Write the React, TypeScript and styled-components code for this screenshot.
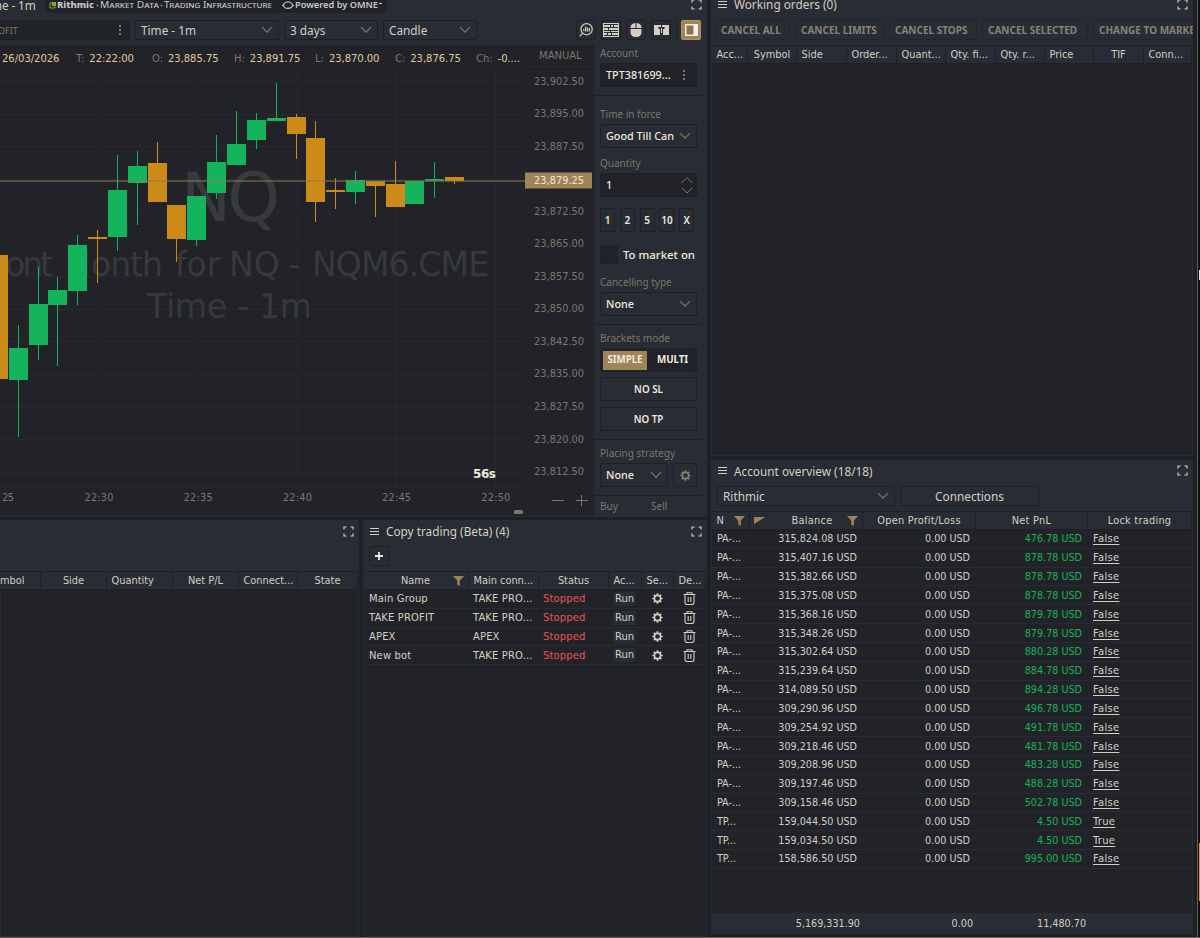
import { FC, ReactNode } from 'react';
import styled, { createGlobalStyle, css } from 'styled-components';

const theme = {
  page: '#1d2026',
  panel: '#282c34',
  dark: '#212329',
  line: '#1d2026',
  grid: '#26292e',
  text: '#d5cfc2',
  bright: '#efe9dc',
  muted: '#7d776c',
  gold: '#a08458',
  green: '#14b45c',
  orange: '#cb8b16',
  red: '#ec5052',
};

const fonts = {
  ui: '"Noto Sans", "Open Sans", sans-serif',
  table: '"DejaVu Sans Condensed", "DejaVu Sans", sans-serif',
  chart: '"DejaVu Sans", sans-serif',
};

const GlobalStyle = createGlobalStyle`
  * {
    box-sizing: border-box;
  }

  body {
    margin: 0;
    background: ${theme.page};
    overflow: hidden;
  }

  button {
    font: inherit;
    color: inherit;
    margin: 0;
    padding: 0;
  }
`;

const Screen = styled.div`
  display: grid;
  grid-template-columns: 707px 4px 482px 4px 1px 2px;
  width: 1200px;
  height: 938px;
  overflow: hidden;
  background: ${theme.page};
  color: ${theme.text};
  font-family: ${fonts.ui};
  font-size: 11.8px;
  border-bottom: 1px solid #6b5d48;
  white-space: nowrap;
`;

const LeftSide = styled.div`
  display: grid;
  grid-column: 1;
  grid-template-rows: 517px 417px;
  row-gap: 3px;
  min-width: 0;
`;

const RightSide = styled.div`
  display: grid;
  grid-column: 3;
  grid-template-rows: 456px 474px;
  row-gap: 4px;
  min-width: 0;
`;

const WindowEdge = styled.div`
  grid-column: 5;
  background: #6b5d48;
`;

const Behind = styled.div`
  display: flex;
  flex-direction: column;
  grid-column: 6;
  padding-left: 1px;
  background: #0d1016;
`;

const BehindMark = styled.div<{ $color: string; $top: number; $height: number }>`
  height: ${props => props.$height}px;
  margin-top: ${props => props.$top}px;
  background: ${props => props.$color};
`;

const Panel = styled.section`
  display: flex;
  flex-direction: column;
  min-width: 0;
  overflow: hidden;
  background: ${theme.panel};
`;

const BottomPanels = styled.div`
  display: grid;
  grid-template-columns: 359px 344px;
  column-gap: 4px;
`;

const PanelHeader = styled.header<{ $height: number; $space: number }>`
  display: flex;
  align-items: center;
  flex: none;
  height: ${props => props.$height}px;
  margin-bottom: ${props => props.$space}px;
  padding: 0 5px 0 7px;
  gap: 7px;
  font-size: 11.8px;

  > :last-child {
    margin-left: auto;
  }
`;

const control = css`
  display: flex;
  align-items: center;
  border: 1px solid ${theme.line};
  border-radius: 2px;
  background: ${theme.panel};
`;

/* ---------- icons ---------- */

const ExpandIcon = () => (
  <svg width="11" height="11" viewBox="0 0 11 11" fill="none" stroke={theme.text} strokeWidth="1.2">
    <path d="M1 3.6V1h2.6M7.4 1H10v2.6M10 7.4V10H7.4M3.6 10H1V7.4" />
  </svg>
);

const MenuIcon = () => (
  <svg width="9" height="9" viewBox="0 0 9 9" stroke={theme.text} strokeWidth="1">
    <path d="M0 1.5h9M0 4.5h9M0 7.5h9" />
  </svg>
);

const Chevron = () => (
  <svg width="12" height="8" viewBox="0 0 12 8" fill="none" stroke={theme.muted} strokeWidth="1.2">
    <path d="M1 1.2l5 5 5-5" />
  </svg>
);

const Dots = () => (
  <svg width="4" height="12" viewBox="0 0 4 12" fill={theme.muted}>
    <path d="M1 1h2v2H1zM1 5h2v2H1zM1 9h2v2H1z" />
  </svg>
);

const FilterIcon = () => (
  <svg width="11" height="10" viewBox="0 0 11 10" fill={theme.gold}>
    <path d="M0 0h11L6.8 4.6V10L4.2 8.6v-4z" />
  </svg>
);

const SortIcon = () => (
  <svg width="11" height="7" viewBox="0 0 11 7" fill={theme.gold}>
    <path d="M0 0h11L0 7z" />
  </svg>
);

const GearIcon: FC<{ color: string }> = ({ color }) => (
  <svg width="11" height="11" viewBox="0 0 12 12" fill="none" stroke={color}>
    <circle cx="6" cy="6" r="3.4" strokeWidth="1.7" />
    <path
      strokeWidth="1.9"
      d="M6 .4v2M6 9.6v2M.4 6h2M9.6 6h2M2 2l1.5 1.5M8.5 8.5L10 10M10 2L8.5 3.5M3.5 8.5L2 10"
    />
  </svg>
);

const TrashIcon = () => (
  <svg width="13" height="13" viewBox="0 0 13 13" fill="none" stroke={theme.text} strokeWidth="1.1">
    <path d="M.5 2.5h12M4 2.5V.8h5v1.7M2 2.5v8q0 2 2 2h5q2 0 2-2v-8M5.2 5v5M7.8 5v5" />
  </svg>
);

const SearchChartIcon = () => (
  <svg width="14" height="14" viewBox="0 0 14 14" fill="none" stroke={theme.text} strokeWidth="1.2">
    <circle cx="7.6" cy="6.2" r="5.6" />
    <path d="M3.8 10L.8 13.3M4.8 6v2M6.6 3.5v5M8.5 4.5v4M10.4 5v3.5" />
  </svg>
);

const RowsIcon = () => (
  <svg width="16" height="14" viewBox="0 0 16 14" fill={theme.text} shapeRendering="crispEdges">
    <path d="M0 0h16v1H0zM0 13h16v1H0zM0 1h1v12H0zM15 1h1v12h-1z" />
    <path d="M1 2h6v2H1zM8 2h2v2H8zM11 2h4v2h-4zM1 5h4v2H1zM6 5h9v2H6zM1 8h6v1H1zM8 8h7v1H8zM1 10h3v2H1zM5 10h3v2H5zM9 10h6v2H9z" />
  </svg>
);

const MouseIcon = () => (
  <svg width="12" height="14" viewBox="0 0 12 14" fill={theme.text}>
    <path d="M5.5 0v5H.5V4.500Q.8.3 5.5 0zM6.5 0v5h5V4.500Q11.2.3 6.5 0zM.5 6h11v3q0 5-5.5 5T.5 9z" />
  </svg>
);

const BookIcon = () => (
  <svg width="15" height="10" viewBox="0 0 15 10" fill={theme.text}>
    <path d="M0 0h7v2H4.5v2H6v6H0zM8 0h7v10H9V4h1.5V2H8zM7 3h1v5H7z" />
  </svg>
);

const SidebarIcon = () => (
  <svg width="13" height="12" viewBox="0 0 13 12">
    <path d="M0 0h13v12H0z" fill="#f5f1e8" />
    <path d="M1.5 1.5h7v9h-7z" fill="#8b7350" />
  </svg>
);

/* ---------- chart window ---------- */

const ChartTitle = styled.div`
  display: flex;
  align-items: flex-start;
  flex: none;
  height: 20px;
  padding-right: 5px;

  > :last-child {
    margin-left: auto;
    margin-top: -1px;
  }
`;

const ChartName = styled.div`
  width: 45px;
  margin-top: -3px;
  line-height: 16px;
  text-indent: -9px;
  letter-spacing: -0.1px;
`;

const Provider = styled.div`
  display: flex;
  align-items: center;
  width: 342px;
  height: 13px;
  padding: 0 3px 3px;
  background: ${theme.dark};
  color: #c8c8c8;
`;

const ChartToolbar = styled.div`
  display: flex;
  flex: none;
  height: 25px;
`;

const Field = styled.div<{ $width: number; $gap?: number; $dark?: boolean; $tall?: boolean }>`
  ${control}
  flex: none;
  justify-content: space-between;
  width: ${props => props.$width}px;
  height: ${props => (props.$tall ? 24 : 20)}px;
  margin-right: ${props => props.$gap ?? 0}px;
  padding: 0 5px 1px 5px;
  ${props => props.$dark && `background: ${theme.dark};`}
`;

const ProfileField = styled(Field)`
  padding: 0 7px 0 0;
  border-left: 0;
  color: ${theme.muted};
  font-size: 9px;
  text-indent: -2px;
`;

const AccountField = styled(Field)`
  padding-right: 10px;
`;

const QuantityField = styled(Field)`
  padding-right: 2px;
`;

const ToolButton = styled.button<{ $active?: boolean }>`
  ${control}
  justify-content: center;
  width: 20px;
  height: 20px;
  margin-right: 5px;
  ${props => props.$active && `background: ${theme.gold}; border-color: #b59462;`}
`;

const ToolGroup = styled.div`
  display: flex;
  margin-left: 99px;
`;

const ToolSeparator = styled.div`
  width: 1px;
  height: 20px;
  margin-right: 4px;
  background: ${theme.line};
`;

const ChartBody = styled.div`
  display: grid;
  grid-template-columns: 594px 113px;
  height: 472px;
`;

const ChartArea = styled.div`
  background: ${theme.dark};
  border-bottom: 1px solid ${theme.panel};
  font-family: ${fonts.chart};
`;

const InfoBar = styled.div`
  display: grid;
  grid-template-columns: 76px 76px 82px 81px 80px 81px 49px 69px;
  align-items: center;
  height: 21px;
  padding-top: 5px;
  font-size: 10px;
  letter-spacing: -0.04px;
  color: #e0c99d;
`;

const InfoDate = styled.span`
  padding-left: 2px;
  letter-spacing: -0.02px;
`;

const InfoKey = styled.span`
  margin-right: 5px;
  color: ${theme.muted};
`;

const AxisMode = styled.div`
  padding-left: 14px;
  margin-top: -5px;
  color: ${theme.muted};
  letter-spacing: 0;
`;

type CandleData = {
  x: number;
  top: number;
  bottom: number;
  high: number;
  low: number;
  up: boolean;
};

const candle = (
  x: number,
  top: number,
  bottom: number,
  high: number,
  low: number,
  up = true,
): CandleData => ({ x, top, bottom, high, low, up });

const candles = [
  candle(-12, 255, 379, 255, 379, false),
  candle(9, 348, 380, 325, 437),
  candle(29, 304, 345, 267, 360),
  candle(48, 290, 305, 277, 366),
  candle(68, 245, 291, 235, 305),
  candle(88, 237, 239, 230, 283, false),
  candle(108, 190, 237, 155, 251),
  candle(128, 166, 183, 151, 225),
  candle(148, 163, 202, 142, 202, false),
  candle(167, 205, 239, 205, 262, false),
  candle(187, 196, 240, 196, 246),
  candle(207, 162, 193, 135, 199),
  candle(227, 144, 165, 111, 165),
  candle(247, 120, 140, 113, 149),
  candle(267, 118, 121, 83, 121),
  candle(287, 117, 134, 114, 159, false),
  candle(306, 138, 202, 121, 222, false),
  candle(326, 190, 192, 178, 209, false),
  candle(346, 180, 192, 171, 204),
  candle(366, 181, 186, 181, 217, false),
  candle(386, 184, 207, 161, 207, false),
  candle(405, 181, 204, 181, 204),
  candle(425, 179, 181, 162, 198),
  candle(445, 177, 181, 177, 184, false),
];

const prices = [
  '23,902.50',
  '23,895.00',
  '23,887.50',
  '23,879.25',
  '23,872.50',
  '23,865.00',
  '23,857.50',
  '23,850.00',
  '23,842.50',
  '23,835.00',
  '23,827.50',
  '23,820.00',
  '23,812.50',
];

const times = ['22:30', '22:35', '22:40', '22:45', '22:50'];

const PriceChart = () => (
  <svg width="594" height="449" viewBox="0 66 594 449" fontFamily={fonts.chart} display="block">
    <g stroke={theme.grid} shapeRendering="crispEdges">
      {prices.map((price, i) => (
        <path key={price} d={`M0 ${Math.round(81 + i * 32.55)}.5H525`} />
      ))}
      {times.map((time, i) => (
        <path key={time} d={`M${Math.round(98 + i * 99.3)}.5 66V487`} />
      ))}
      <path d="M525 66.5H594M0 487.5H525" />
    </g>
    <g fill="#38393c">
      <text x="181" y="221" fontSize="67" textLength="99">NQ</text>
      <g fontSize="33">
        <text x="5" y="276" textLength="48">ont</text>
        <text x="65" y="276" textLength="25.5" lengthAdjust="spacingAndGlyphs">M</text>
        <text x="91" y="276" textLength="72">onth</text>
        <text x="175" y="276">for</text>
        <text x="229" y="276">NQ</text>
        <text x="288" y="276">-</text>
        <text x="312" y="276" textLength="177">NQM6.CME</text>
        <text x="147" y="318" textLength="165">Time - 1m</text>
      </g>
    </g>
    {candles.map(c => (
      <g key={c.x} fill={c.up ? theme.green : theme.orange} shapeRendering="crispEdges">
        <rect x={c.x + 9} y={c.high} width="1" height={c.low - c.high} />
        <rect x={c.x} y={c.top} width={c.x < 0 ? 20 : 19} height={c.bottom - c.top} />
      </g>
    ))}
    <path d="M0 181H525" stroke="#917850" strokeWidth="1" />
    <rect x="525" y="172.5" width="67" height="16" fill={theme.gold} />
    <g fontSize="9.8" fill={theme.muted}>
      {prices.map((price, i) => (
        <text
          key={price}
          x="534"
          y={(i === 3 ? 86 : 84.5) + i * 32.55}
          textLength="50"
          fill={i === 3 ? theme.bright : undefined}
        >
          {price}
        </text>
      ))}
      <text x="2" y="501" textLength="12">25</text>
      {times.map((time, i) => (
        <text key={time} x={84.5 + i * 99.2} y="501" textLength="29">
          {time}
        </text>
      ))}
    </g>
    <text x="473" y="478" fontSize="12" fontWeight="bold" fill={theme.bright} textLength="23">
      56s
    </text>
    <path d="M552 500.5h12M576 500.5h12M581.5 495v11" stroke={theme.muted} />
    <rect x="514" y="510" width="9" height="4" rx="1.5" fill={theme.muted} />
  </svg>
);

/* ---------- order entry ---------- */

const OrderEntry = styled.aside`
  display: flex;
  flex-direction: column;
  margin-right: 4px;
  padding-right: 1px;
  font-size: 11px;
`;

const Label = styled.div<{ $top?: number }>`
  height: 18px;
  margin-top: ${props => props.$top ?? 0}px;
  padding-left: 6px;
  line-height: 16px;
  font-size: 10px;
  color: ${theme.muted};
`;

const Group = styled.div`
  flex: none;
  padding-bottom: 8px;
  border-bottom: 1px solid ${theme.line};
`;

const Line = styled.div<{ $top?: number }>`
  display: flex;
  margin: ${props => props.$top ?? 0}px 0 0 6px;
  font-size: 10.8px;
  font-weight: 500;
  color: ${theme.bright};
`;

const QuantityButton = styled.button`
  ${control}
  justify-content: center;
  width: 15px;
  height: 24px;
  margin-right: 4.8px;
  font-size: 10px;
  font-weight: 600;
  letter-spacing: -0.2px;
`;

const Checkbox = styled.span`
  width: 18px;
  height: 18px;
  margin-right: 5px;
  border: 1px solid ${theme.line};
  background: ${theme.dark};
`;

const CheckLabel = styled.span`
  font-size: 11.4px;
  line-height: 18px;
`;

const Modes = styled.div`
  ${control}
  width: 97px;
  height: 24px;
  padding: 2px;
  background: ${theme.dark};
`;

const Mode = styled.button<{ $active?: boolean }>`
  flex: none;
  width: ${props => (props.$active ? 44 : 49)}px;
  height: 19px;
  border: 0;
  padding: 0 0 1px ${props => (props.$active ? 0 : 2)}px;
  background: ${props => (props.$active ? theme.gold : 'transparent')};
  font-size: 9.8px;
  font-weight: 700;
  letter-spacing: -0.1px;
`;

const WideButton = styled.button`
  ${control}
  justify-content: center;
  width: 97px;
  height: 24px;
  font-size: 9.8px;
  font-weight: 600;
`;

const BuySell = styled.div`
  display: grid;
  grid-template-columns: 51px 1fr;
  padding: 3px 0 0 6px;
  font-size: 10px;
  line-height: 14px;
  color: ${theme.muted};
`;

const GearButton = styled(ToolButton)`
  width: 24px;
  height: 24px;
  margin: 0;
`;

/* ---------- tables ---------- */

const Toolbar = styled.div<{ $height: number; $left?: number; $gap?: number; $top?: number }>`
  display: flex;
  flex: none;
  gap: ${props => props.$gap ?? 6}px;
  height: ${props => props.$height}px;
  padding: ${props => props.$top ?? 0}px 0 0 ${props => props.$left ?? 6}px;
  overflow: hidden;
`;

const OrderAction = styled.button<{ $width: number }>`
  ${control}
  flex: none;
  width: ${props => props.$width}px;
  height: 20px;
  padding-left: 5px;
  border-color: #22262c;
  font-size: 10px;
  font-weight: 700;
  letter-spacing: 0;
  color: #878378;
`;

const ConnectionsButton = styled.button`
  ${control}
  justify-content: center;
  width: 139px;
  height: 20px;
  margin-left: -1px;
  padding-bottom: 1px;
`;

const TableBody = styled.div`
  flex: 1;
  margin: 0 1px 1px;
  background: ${theme.dark};
`;

const HeadRow = styled.div<{ $columns: string; $flush?: boolean; $spacing?: number }>`
  display: grid;
  grid-template-columns: ${props => props.$columns};
  flex: none;
  height: 19px;
  margin: 0 1px 0 ${props => (props.$flush ? 0 : 1)}px;
  border-top: 1px solid ${theme.line};
  border-bottom: 1px solid ${theme.line};
  font-family: ${fonts.table};
  font-size: 10.9px;
  letter-spacing: ${props => props.$spacing ?? 0}px;
`;

const HeadCell = styled.div<{ $left?: boolean }>`
  display: flex;
  align-items: center;
  justify-content: ${props => (props.$left ? 'flex-start' : 'center')};
  min-width: 0;
  padding: 0 4px 0 ${props => (props.$left ? 4.5 : 4)}px;
  border-right: 1px solid ${theme.line};
  overflow: hidden;
`;

const CutHeadCell = styled(HeadCell)`
  padding-left: 0;
`;

const Heading = styled.span<{ $shift?: number }>`
  margin: auto;
  padding-left: ${props => props.$shift ?? 0}px;
`;

const Row = styled.div<{ $columns: string }>`
  display: grid;
  grid-template-columns: ${props => props.$columns};
  align-items: center;
  height: 18.83px;
  border-bottom: 1px solid ${theme.panel};
  font-family: ${fonts.table};
  font-size: 10.7px;
`;

const BotRow = styled(Row)`
  font-size: 11.1px;
  letter-spacing: 0.15px;
`;

const Cell = styled.div<{ $color?: string; $right?: boolean; $center?: boolean }>`
  display: flex;
  justify-content: ${props => (props.$right ? 'flex-end' : props.$center ? 'center' : 'flex-start')};
  padding: 0 6px 0 5px;
  color: ${props => props.$color ?? theme.text};
`;

const LockLink = styled.a`
  font-size: 11.1px;
  letter-spacing: 0.3px;
  text-decoration: underline;
  text-underline-offset: 2px;
`;

const RunButton = styled.button`
  width: 31px;
  height: 14px;
  border: 0;
  border-radius: 2px;
  background: ${theme.panel};
  line-height: 14px;
`;

const Totals = styled.div`
  display: grid;
  grid-template-columns: 148px 113px 113px;
  align-items: center;
  flex: none;
  height: 19px;
  margin: 0 1px 1px;
  font-family: ${fonts.table};
  font-size: 10.7px;
  text-align: right;
`;

const PanelTitle: FC<{ children?: ReactNode; height: number; space?: number }> = ({
  children,
  height,
  space = 0,
}) => (
  <PanelHeader $height={height} $space={space}>
    {children && <MenuIcon />}
    {children && <span>{children}</span>}
    <ExpandIcon />
  </PanelHeader>
);

const POSITION_COLUMNS = '41px 66px 66px 66px 59px 60px';
const COPY_COLUMNS = '105px 70px 70px 33px 32px 32px';
const BOT_COLUMNS = '104px 70px 70px 34px 31px 33px';
const ORDER_COLUMNS = '36px 49px 50px 50px 49px 50px 49px 49px 50px 48px';
const ACCOUNT_COLUMNS = '38px 113px 113px 112px 104px';

const bots = [
  ['Main Group', 'TAKE PRO...'],
  ['TAKE PROFIT', 'TAKE PRO...'],
  ['APEX', 'APEX'],
  ['New bot', 'TAKE PRO...'],
];

const accounts = [
  ['PA-...', '315,824.08', '476.78', 'False'],
  ['PA-...', '315,407.16', '878.78', 'False'],
  ['PA-...', '315,382.66', '878.78', 'False'],
  ['PA-...', '315,375.08', '878.78', 'False'],
  ['PA-...', '315,368.16', '879.78', 'False'],
  ['PA-...', '315,348.26', '879.78', 'False'],
  ['PA-...', '315,302.64', '880.28', 'False'],
  ['PA-...', '315,239.64', '884.78', 'False'],
  ['PA-...', '314,089.50', '894.28', 'False'],
  ['PA-...', '309,290.96', '496.78', 'False'],
  ['PA-...', '309,254.92', '491.78', 'False'],
  ['PA-...', '309,218.46', '481.78', 'False'],
  ['PA-...', '309,208.96', '483.28', 'False'],
  ['PA-...', '309,197.46', '488.28', 'False'],
  ['PA-...', '309,158.46', '502.78', 'False'],
  ['TP...', '159,044.50', '4.50', 'True'],
  ['TP...', '159,034.50', '4.50', 'True'],
  ['TP...', '158,586.50', '995.00', 'False'],
];

const info = [
  ['T:', '22:22:00'],
  ['O:', '23,885.75'],
  ['H:', '23,891.75'],
  ['L:', '23,870.00'],
  ['C:', '23,876.75'],
  ['Ch:', '-0....'],
];

const SmallCaps = styled.text`
  font-variant: small-caps;
`;

const ProviderLogo = () => (
  <svg width="336" height="10" viewBox="48 0 336 10" fontFamily={fonts.ui} fill="#c8c8c8">
    <path d="M50 3h5v5h-5z" fill="none" stroke="#85a820" />
    <path d="M52 2h4v4h-4z" fill="#85a820" />
    <g fontSize="8">
      <text x="57" y="8" fontWeight="800" textLength="37" lengthAdjust="spacingAndGlyphs">
        Rithmic
      </text>
      <SmallCaps x="100" y="8" textLength="59" lengthAdjust="spacingAndGlyphs">
        Market Data
      </SmallCaps>
      <SmallCaps x="164" y="8" textLength="108" lengthAdjust="spacingAndGlyphs">
        Trading Infrastructure
      </SmallCaps>
      <text x="295" y="8" fontWeight="600" textLength="83" lengthAdjust="spacingAndGlyphs">
        Powered by OMNE
      </text>
    </g>
    <path d="M379 3.5h3" stroke="#c8c8c8" />
    <circle cx="161.5" cy="5.5" r="1" fill="#85a820" />
    <circle cx="97.5" cy="5.5" r="1" fill="#85a820" />
    <ellipse cx="288" cy="5.2" rx="4.5" ry="3.2" fill="none" stroke="#c8c8c8" strokeWidth="1.2" />
    <path d="M282 5.5h2M292 5.5h2" stroke="#c8c8c8" />
  </svg>
);

const ChartWindow = () => (
  <Panel>
    <ChartTitle>
      <ChartName>me - 1m</ChartName>
      <Provider>
        <ProviderLogo />
      </Provider>
      <ExpandIcon />
    </ChartTitle>
    <ChartToolbar>
      <ProfileField $width={130} $gap={5} $dark>
        OFIT
        <Dots />
      </ProfileField>
      <Field $width={144} $gap={5}>
        Time - 1m
        <Chevron />
      </Field>
      <Field $width={94} $gap={5}>
        3 days
        <Chevron />
      </Field>
      <Field $width={94}>
        Candle
        <Chevron />
      </Field>
      <ToolGroup>
        <ToolButton><SearchChartIcon /></ToolButton>
        <ToolButton><RowsIcon /></ToolButton>
        <ToolButton><MouseIcon /></ToolButton>
        <ToolButton><BookIcon /></ToolButton>
        <ToolSeparator />
        <ToolButton $active><SidebarIcon /></ToolButton>
      </ToolGroup>
    </ChartToolbar>
    <ChartBody>
      <ChartArea>
        <InfoBar>
          <InfoDate>26/03/2026</InfoDate>
          {info.map(([key, value]) => (
            <span key={key}>
              <InfoKey>{key}</InfoKey>
              {value}
            </span>
          ))}
          <AxisMode>MANUAL</AxisMode>
        </InfoBar>
        <PriceChart />
      </ChartArea>
      <OrderEntry>
        <Group>
          <Label>Account</Label>
          <Line>
            <AccountField $width={97} $tall $dark>
              TPT381699...
              <Dots />
            </AccountField>
          </Line>
        </Group>
        <Group>
          <Label $top={10}>Time in force</Label>
          <Line>
            <Field $width={97} $tall>
              Good Till Can
              <Chevron />
            </Field>
          </Line>
          <Label $top={7}>Quantity</Label>
          <Line>
            <QuantityField $width={97} $tall $dark>
              1
              <svg width="14" height="18" viewBox="0 0 14 18" fill="none" stroke={theme.muted}>
                <path d="M1.5 7L7 1.500l5.500 5.500M1.500 11.500l5.500 5.500 5.500-5.500" />
              </svg>
            </QuantityField>
          </Line>
          <Line $top={11}>
            {['1', '2', '5', '10', 'X'].map(amount => (
              <QuantityButton key={amount}>{amount}</QuantityButton>
            ))}
          </Line>
          <Line $top={14}>
            <Checkbox />
            <CheckLabel>To market on</CheckLabel>
          </Line>
          <Label $top={10}>Cancelling type</Label>
          <Line>
            <Field $width={97} $tall>
              None
              <Chevron />
            </Field>
          </Line>
        </Group>
        <Group>
          <Label $top={5}>Brackets mode</Label>
          <Line>
            <Modes>
              <Mode $active>SIMPLE</Mode>
              <Mode>MULTI</Mode>
            </Modes>
          </Line>
          <Line $top={5}>
            <WideButton>NO SL</WideButton>
          </Line>
          <Line $top={6}>
            <WideButton>NO TP</WideButton>
          </Line>
        </Group>
        <Group>
          <Label $top={5}>Placing strategy</Label>
          <Line>
            <Field $width={68} $gap={5} $tall>
              None
              <Chevron />
            </Field>
            <GearButton>
              <GearIcon color="#858076" />
            </GearButton>
          </Line>
        </Group>
        <BuySell>
          <span>Buy</span>
          <span>Sell</span>
        </BuySell>
      </OrderEntry>
    </ChartBody>
  </Panel>
);

const Positions = () => (
  <Panel>
    <PanelTitle height={22} space={29} />
    <HeadRow $columns={POSITION_COLUMNS} $flush>
      <CutHeadCell $left>mbol</CutHeadCell>
      <HeadCell>Side</HeadCell>
      <HeadCell $left>Quantity</HeadCell>
      <HeadCell>Net P/L</HeadCell>
      <HeadCell $left>Connect...</HeadCell>
      <HeadCell>State</HeadCell>
    </HeadRow>
    <TableBody />
  </Panel>
);

const CopyTrading = () => (
  <Panel>
    <PanelTitle height={22} space={4}>Copy trading (Beta) (4)</PanelTitle>
    <Toolbar $height={25}>
      <ToolButton>
        <svg width="8" height="8" viewBox="0 0 8 8" stroke={theme.bright} strokeWidth="1.8">
          <path d="M0 4h8M4 0v8" />
        </svg>
      </ToolButton>
    </Toolbar>
    <HeadRow $columns={COPY_COLUMNS}>
      <HeadCell>
        <Heading $shift={10}>Name</Heading>
        <FilterIcon />
      </HeadCell>
      <HeadCell $left>Main conn...</HeadCell>
      <HeadCell>Status</HeadCell>
      <HeadCell $left>Ac...</HeadCell>
      <HeadCell $left>Se...</HeadCell>
      <HeadCell $left>De...</HeadCell>
    </HeadRow>
    <TableBody>
      {bots.map(([name, connection]) => (
        <BotRow key={name} $columns={BOT_COLUMNS}>
          <Cell>{name}</Cell>
          <Cell>{connection}</Cell>
          <Cell $color={theme.red}>Stopped</Cell>
          <Cell $center>
            <RunButton>Run</RunButton>
          </Cell>
          <Cell $center>
            <GearIcon color={theme.text} />
          </Cell>
          <Cell $center>
            <TrashIcon />
          </Cell>
        </BotRow>
      ))}
    </TableBody>
  </Panel>
);

const WorkingOrders = () => (
  <Panel>
    <PanelTitle height={8} space={2}>Working orders (0)</PanelTitle>
    <Toolbar $height={35} $left={4} $gap={5} $top={10}>
      <OrderAction $width={75}>CANCEL ALL</OrderAction>
      <OrderAction $width={89}>CANCEL LIMITS</OrderAction>
      <OrderAction $width={88}>CANCEL STOPS</OrderAction>
      <OrderAction $width={106}>CANCEL SELECTED</OrderAction>
      <OrderAction $width={124}>CHANGE TO MARKET</OrderAction>
    </Toolbar>
    <HeadRow $columns={ORDER_COLUMNS}>
      <HeadCell $left>Acc...</HeadCell>
      <HeadCell>Symbol</HeadCell>
      <HeadCell $left>Side</HeadCell>
      <HeadCell $left>Order...</HeadCell>
      <HeadCell $left>Quant...</HeadCell>
      <HeadCell $left>Qty. fi...</HeadCell>
      <HeadCell $left>Qty. r...</HeadCell>
      <HeadCell $left>Price</HeadCell>
      <HeadCell>TIF</HeadCell>
      <HeadCell $left>Conn...</HeadCell>
    </HeadRow>
    <TableBody />
  </Panel>
);

const AccountOverview = () => (
  <Panel>
    <PanelTitle height={21} space={5}>Account overview (18/18)</PanelTitle>
    <Toolbar $height={25}>
      <Field $width={178}>
        Rithmic
        <Chevron />
      </Field>
      <ConnectionsButton>Connections</ConnectionsButton>
    </Toolbar>
    <HeadRow $columns={ACCOUNT_COLUMNS} $spacing={0.25}>
      <HeadCell $left>
        N
        <Heading />
        <FilterIcon />
      </HeadCell>
      <HeadCell>
        <SortIcon />
        <Heading $shift={12}>Balance</Heading>
        <FilterIcon />
      </HeadCell>
      <HeadCell>Open Profit/Loss</HeadCell>
      <HeadCell>Net PnL</HeadCell>
      <HeadCell>Lock trading</HeadCell>
    </HeadRow>
    <TableBody>
      {accounts.map(([name, balance, pnl, locked]) => (
        <Row key={balance} $columns={ACCOUNT_COLUMNS}>
          <Cell>{name}</Cell>
          <Cell $right>{balance} USD</Cell>
          <Cell $right>0.00 USD</Cell>
          <Cell $right $color={theme.green}>{pnl} USD</Cell>
          <Cell>
            <LockLink>{locked}</LockLink>
          </Cell>
        </Row>
      ))}
    </TableBody>
    <Totals>
      <span>5,169,331.90</span>
      <span>0.00</span>
      <span>11,480.70</span>
    </Totals>
  </Panel>
);

const App = () => (
  <>
    <GlobalStyle />
    <Screen>
      <LeftSide>
        <ChartWindow />
        <BottomPanels>
          <Positions />
          <CopyTrading />
        </BottomPanels>
      </LeftSide>
      <RightSide>
        <WorkingOrders />
        <AccountOverview />
      </RightSide>
      <WindowEdge />
      <Behind>
        <BehindMark $color="#e6e6e6" $top={270} $height={10} />
        <BehindMark $color="#e69a10" $top={563} $height={58} />
      </Behind>
    </Screen>
  </>
);

export default App;
